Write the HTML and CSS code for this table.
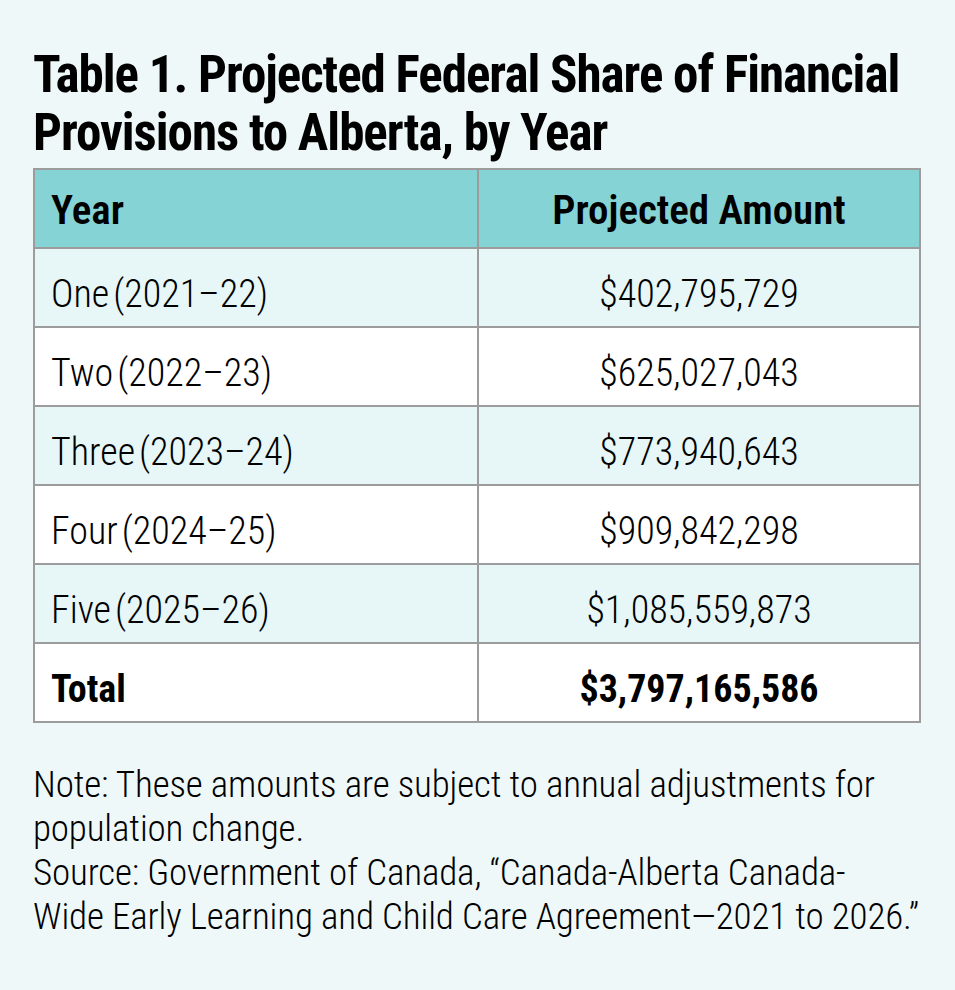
FILE: index.html
```html
<!DOCTYPE html>
<html lang="en">
<head>
<meta charset="utf-8">
<title>Table 1</title>
<link rel="stylesheet" href="styles.css">
</head>
<body>
<main class="page">
  <h1 class="title">Table 1. Projected Federal Share of Financial Provisions to Alberta, by Year</h1>
  <table class="data">
    <thead>
      <tr><th class="c-year">Year</th><th class="c-amt">Projected Amount</th></tr>
    </thead>
    <tbody>
      <tr class="alt"><td class="c-year">One (2021–22)</td><td class="c-amt">$402,795,729</td></tr>
      <tr><td class="c-year">Two (2022–23)</td><td class="c-amt">$625,027,043</td></tr>
      <tr class="alt"><td class="c-year">Three (2023–24)</td><td class="c-amt">$773,940,643</td></tr>
      <tr><td class="c-year">Four (2024–25)</td><td class="c-amt">$909,842,298</td></tr>
      <tr class="alt"><td class="c-year">Five (2025–26)</td><td class="c-amt">$1,085,559,873</td></tr>
      <tr class="total"><td class="c-year">Total</td><td class="c-amt">$3,797,165,586</td></tr>
    </tbody>
  </table>
  <p class="note">Note: These amounts are subject to annual adjustments for population change.<br>Source: Government of Canada, “Canada-Alberta Canada-<br>Wide Early Learning and Child Care Agreement—2021 to 2026.”</p>
</main>
</body>
</html>
```
FILE: styles.css
```css
html, body {
  margin: 0;
  padding: 0;
  background: #eff8f9;
}
body {
  font-family: "Roboto Condensed", Roboto, "Liberation Sans", sans-serif;
  font-stretch: 80%;
  color: #000;
}
.page {
  padding: 46px 34px 0 33px;
}
.title {
  margin: 0 0 6px;
  font-size: 51px;
  line-height: 58px;
  font-weight: 700;
  letter-spacing: -0.02em;
}
.data {
  width: 888px;
  border-collapse: collapse;
  border: 2px solid #9c9c9c;
}
.data th, .data td {
  border: 2px solid #9c9c9c;
  padding: 0 0 0 16px;
  text-align: left;
  vertical-align: middle;
}
.data th {
  background: #85d3d5;
  font-size: 41px;
  font-weight: 600;
  height: 75px;
  padding-top: 2px;
}
.data td {
  font-size: 38px;
  font-weight: 300;
  background: #fff;
  height: 65px;
  padding-top: 12px;
}
.data td.c-year {
  word-spacing: -0.12em;
}
.data .alt td {
  background: #e7f6f6;
}
.data .c-year {
  width: 426px;
}
.data .c-amt {
  text-align: center;
  padding-left: 0;
}
.data .total td {
  font-weight: 700;
  word-spacing: 0;
}
.note {
  margin: 40px -8px 0 0;
  font-size: 37px;
  line-height: 44px;
  font-weight: 300;
  letter-spacing: -0.004em;
}
```
